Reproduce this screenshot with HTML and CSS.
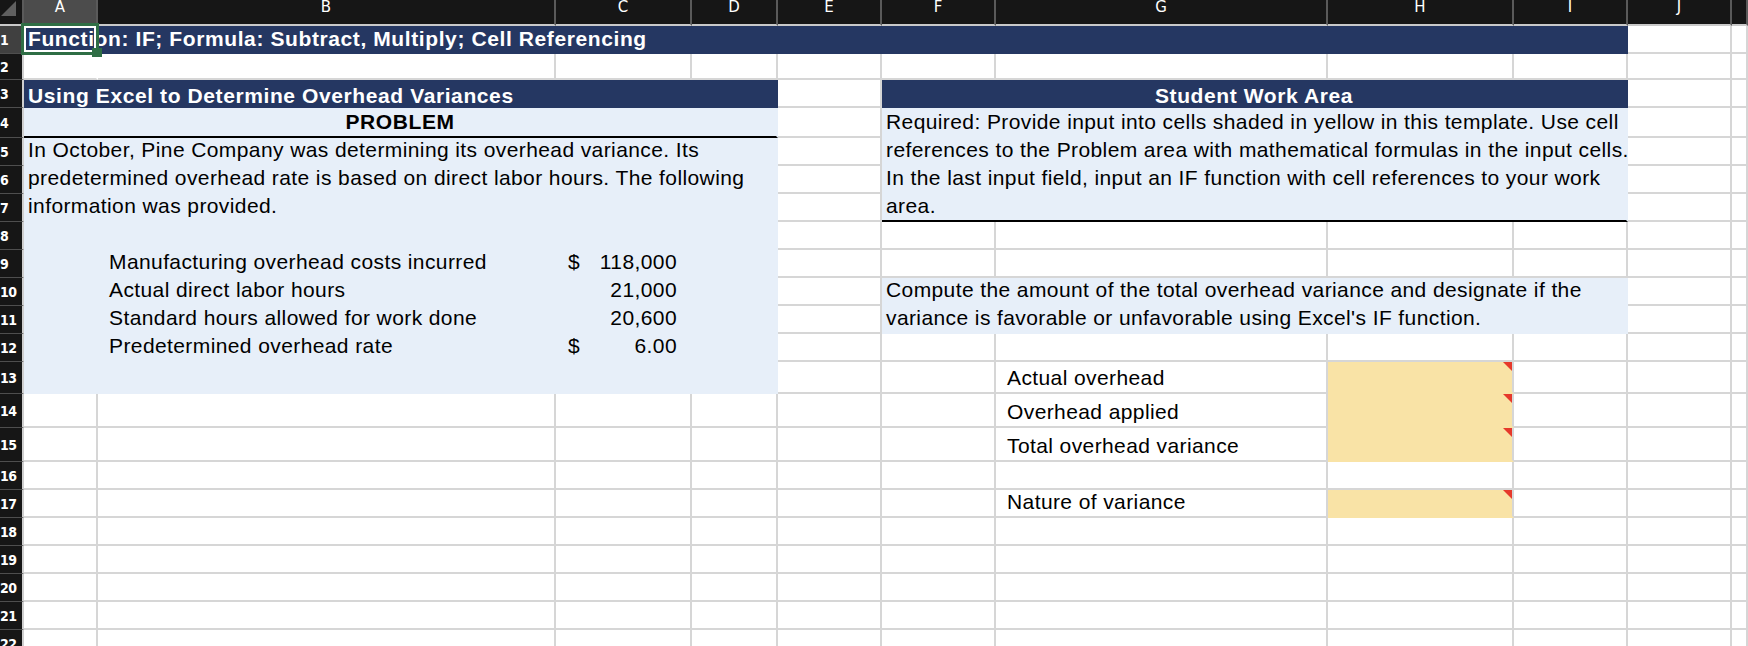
FILE: index.html
```html
<!DOCTYPE html>
<html lang="en">
<head>
<meta charset="utf-8">
<title>Overhead Variances</title>
<link rel="stylesheet" href="styles.css">
</head>
<body>
<div class="sheet">
  <div class="corner"><svg class="corner-tri" width="17" height="17" viewBox="0 0 17 17"><polygon points="16,1 16,16 1,16" fill="#5f5f5f"/></svg></div>
  <div class="ch ch-sel">A</div>
  <div class="ch">B</div>
  <div class="ch">C</div>
  <div class="ch">D</div>
  <div class="ch">E</div>
  <div class="ch">F</div>
  <div class="ch">G</div>
  <div class="ch">H</div>
  <div class="ch">I</div>
  <div class="ch">J</div>
  <div class="ch"></div>

  <!-- row 1 -->
  <div class="rh rh-sel"><span>1</span></div>
  <div class="c navy span9 r1">Function: IF; Formula: Subtract, Multiply; Cell Referencing</div>
  <div class="c"></div><div class="c"></div>

  <!-- row 2 -->
  <div class="rh"><span>2</span></div>
  <div class="c nr"></div><div class="c"></div><div class="c"></div><div class="c"></div><div class="c"></div>
  <div class="c"></div><div class="c"></div><div class="c"></div><div class="c"></div><div class="c"></div><div class="c"></div>

  <!-- row 3 -->
  <div class="rh"><span>3</span></div>
  <div class="c navy span4 r3">Using Excel to Determine Overhead Variances</div>
  <div class="c"></div>
  <div class="c navy span4 r3 ctr">Student Work Area</div>
  <div class="c"></div><div class="c"></div>

  <!-- row 4 -->
  <div class="rh"><span>4</span></div>
  <div class="c blue span4 ctr bold rule">PROBLEM</div>
  <div class="c"></div>
  <div class="c blue span4">Required: Provide input into cells shaded in yellow in this template. Use cell</div>
  <div class="c"></div><div class="c"></div>

  <!-- row 5 -->
  <div class="rh"><span>5</span></div>
  <div class="c blue span4">In October, Pine Company was determining its overhead variance. Its</div>
  <div class="c"></div>
  <div class="c blue span4">references to the Problem area with mathematical formulas in the input cells.</div>
  <div class="c"></div><div class="c"></div>

  <!-- row 6 -->
  <div class="rh"><span>6</span></div>
  <div class="c blue span4">predetermined overhead rate is based on direct labor hours. The following</div>
  <div class="c"></div>
  <div class="c blue span4">In the last input field, input an IF function with cell references to your work</div>
  <div class="c"></div><div class="c"></div>

  <!-- row 7 -->
  <div class="rh"><span>7</span></div>
  <div class="c blue span4">information was provided.</div>
  <div class="c"></div>
  <div class="c blue span4 rule">area.</div>
  <div class="c"></div><div class="c"></div>

  <!-- row 8 -->
  <div class="rh"><span>8</span></div>
  <div class="c blue span4"></div>
  <div class="c"></div><div class="c"></div><div class="c"></div><div class="c"></div><div class="c"></div><div class="c"></div><div class="c"></div>

  <!-- row 9 -->
  <div class="rh"><span>9</span></div>
  <div class="c blue"></div>
  <div class="c blue ind">Manufacturing overhead costs incurred</div>
  <div class="c blue num"><span>$</span><span>118,000</span></div>
  <div class="c blue"></div>
  <div class="c"></div><div class="c"></div><div class="c"></div><div class="c"></div><div class="c"></div><div class="c"></div><div class="c"></div>

  <!-- row 10 -->
  <div class="rh"><span>10</span></div>
  <div class="c blue"></div>
  <div class="c blue ind">Actual direct labor hours</div>
  <div class="c blue num"><span></span><span>21,000</span></div>
  <div class="c blue"></div>
  <div class="c"></div>
  <div class="c blue span4">Compute the amount of the total overhead variance and designate if the</div>
  <div class="c"></div><div class="c"></div>

  <!-- row 11 -->
  <div class="rh"><span>11</span></div>
  <div class="c blue"></div>
  <div class="c blue ind">Standard hours allowed for work done</div>
  <div class="c blue num"><span></span><span>20,600</span></div>
  <div class="c blue"></div>
  <div class="c"></div>
  <div class="c blue span4">variance is favorable or unfavorable using Excel's IF function.</div>
  <div class="c"></div><div class="c"></div>

  <!-- row 12 -->
  <div class="rh"><span>12</span></div>
  <div class="c blue"></div>
  <div class="c blue ind">Predetermined overhead rate</div>
  <div class="c blue num"><span>$</span><span>6.00</span></div>
  <div class="c blue"></div>
  <div class="c"></div><div class="c"></div><div class="c"></div><div class="c"></div><div class="c"></div><div class="c"></div><div class="c"></div>

  <!-- row 13 -->
  <div class="rh"><span>13</span></div>
  <div class="c blue span4"></div>
  <div class="c"></div><div class="c"></div>
  <div class="c ind">Actual overhead</div>
  <div class="c yellow note"></div>
  <div class="c"></div><div class="c"></div><div class="c"></div>

  <!-- row 14 -->
  <div class="rh"><span>14</span></div>
  <div class="c"></div><div class="c"></div><div class="c"></div><div class="c"></div><div class="c"></div><div class="c"></div>
  <div class="c ind">Overhead applied</div>
  <div class="c yellow note"></div>
  <div class="c"></div><div class="c"></div><div class="c"></div>

  <!-- row 15 -->
  <div class="rh"><span>15</span></div>
  <div class="c"></div><div class="c"></div><div class="c"></div><div class="c"></div><div class="c"></div><div class="c"></div>
  <div class="c ind">Total overhead variance</div>
  <div class="c yellow note"></div>
  <div class="c"></div><div class="c"></div><div class="c"></div>

  <!-- row 16 -->
  <div class="rh"><span>16</span></div>
  <div class="c"></div><div class="c"></div><div class="c"></div><div class="c"></div><div class="c"></div><div class="c"></div>
  <div class="c"></div><div class="c"></div><div class="c"></div><div class="c"></div><div class="c"></div>

  <!-- row 17 -->
  <div class="rh"><span>17</span></div>
  <div class="c"></div><div class="c"></div><div class="c"></div><div class="c"></div><div class="c"></div><div class="c"></div>
  <div class="c ind">Nature of variance</div>
  <div class="c yellow note"></div>
  <div class="c"></div><div class="c"></div><div class="c"></div>

  <!-- rows 18-22 -->
  <div class="rh"><span>18</span></div>
  <div class="c"></div><div class="c"></div><div class="c"></div><div class="c"></div><div class="c"></div><div class="c"></div>
  <div class="c"></div><div class="c"></div><div class="c"></div><div class="c"></div><div class="c"></div>

  <div class="rh"><span>19</span></div>
  <div class="c"></div><div class="c"></div><div class="c"></div><div class="c"></div><div class="c"></div><div class="c"></div>
  <div class="c"></div><div class="c"></div><div class="c"></div><div class="c"></div><div class="c"></div>

  <div class="rh"><span>20</span></div>
  <div class="c"></div><div class="c"></div><div class="c"></div><div class="c"></div><div class="c"></div><div class="c"></div>
  <div class="c"></div><div class="c"></div><div class="c"></div><div class="c"></div><div class="c"></div>

  <div class="rh"><span>21</span></div>
  <div class="c"></div><div class="c"></div><div class="c"></div><div class="c"></div><div class="c"></div><div class="c"></div>
  <div class="c"></div><div class="c"></div><div class="c"></div><div class="c"></div><div class="c"></div>

  <div class="rh"><span>22</span></div>
  <div class="c"></div><div class="c"></div><div class="c"></div><div class="c"></div><div class="c"></div><div class="c"></div>
  <div class="c"></div><div class="c"></div><div class="c"></div><div class="c"></div><div class="c"></div>

  <div class="selection"></div>
  <div class="fill-handle"></div>
</div>
</body>
</html>
```

FILE: styles.css
```css
* { box-sizing: border-box; }

html, body {
  margin: 0;
  padding: 0;
  background: #ffffff;
}

body {
  width: 1748px;
  height: 646px;
  overflow: hidden;
  font-family: "Liberation Sans", Arial, Helvetica, sans-serif;
}

.sheet {
  position: relative;
  display: grid;
  grid-template-columns: 24px 74px 458px 136px 86px 104px 114px 332px 186px 114px 104px 1fr;
  grid-template-rows: 26px 28px 26px 28px 30px 28px 28px 28px 28px 28px 28px 28px 28px 32px 34px 34px 28px 28px 28px 28px 28px 28px 28px;
}

/* column headers */
.corner {
  background: #161616;
  border-right: 2px solid #5a5a5a;
  border-bottom: 2px solid #c9c9c9;
}
.corner-tri { display: block; }

.ch {
  background: #161616;
  color: #ffffff;
  border-right: 2px solid #5a5a5a;
  border-bottom: 2px solid #c9c9c9;
  display: flex;
  justify-content: center;
  align-items: flex-start;
  font-family: "DejaVu Sans", sans-serif;
  font-size: 15px;
  line-height: 14px;
  padding-top: 0;
}
.ch-sel { background: #4c4c4c; }

/* row headers */
.rh {
  background: #161616;
  color: #ffffff;
  border-right: 2px solid #cfcfcf;
  border-bottom: 1px solid #4e4e4e;
  display: flex;
  align-items: center;
  overflow: hidden;
  font-family: "DejaVu Sans Condensed", "DejaVu Sans", sans-serif;
  font-stretch: condensed;
  font-weight: bold;
  font-size: 14px;
  line-height: 16px;
}
.rh span { margin-left: 0; white-space: nowrap; letter-spacing: -0.5px; }
.rh-sel { background: #404040; }

/* cells */
.c {
  min-width: 0;
  border-right: 2px solid #d6d6d6;
  border-bottom: 2px solid #d6d6d6;
  display: flex;
  align-items: flex-end;
  padding: 0 4px 2px 4px;
  font-size: 21px;
  line-height: 24px;
  letter-spacing: 0.4px;
  white-space: nowrap;
  color: #000000;
}

.span4 { grid-column: span 4; }
.span9 { grid-column: span 9; }

.nr { border-right-color: #ffffff; }

.navy {
  background: #253762;
  border-color: #253762;
  color: #ffffff;
  font-weight: bold;
  letter-spacing: 0.6px;
}
.r1 { padding-bottom: 1px; }
.r3 { padding-bottom: 0; line-height: 20px; }

.blue {
  background: #e7eff9;
  border-color: #e7eff9;
}

.bold { font-weight: bold; letter-spacing: 0.6px; }
.ctr { justify-content: center; }
.rule { border-bottom-color: #000000; }
.ind { padding-left: 11px; }

.num {
  justify-content: space-between;
  padding-left: 12px;
  padding-right: 13px;
}

.yellow {
  position: relative;
  background: #f9e3a6;
  border-bottom-color: #f9e3a6;
}
.note::after {
  content: "";
  position: absolute;
  top: 0;
  right: 0;
  width: 0;
  height: 0;
  border-top: 9px solid #e6392b;
  border-left: 9px solid transparent;
}

/* active cell A1 */
.selection {
  position: absolute;
  left: 21px;
  top: 23px;
  width: 78px;
  height: 32px;
  border: 3px solid #2f6e45;
  box-shadow: inset 0 0 0 2px #ffffff;
  pointer-events: none;
}
.fill-handle {
  position: absolute;
  left: 92px;
  top: 48px;
  width: 10px;
  height: 9px;
  background: #2f6e45;
}
```
